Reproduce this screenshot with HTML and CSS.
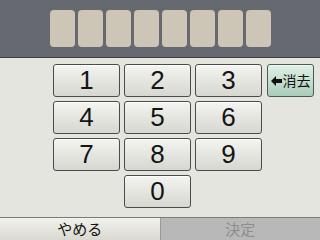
FILE: index.html
```html
<!DOCTYPE html>
<html lang="ja">
<head>
    <meta charset="UTF-8">
    <title>PIN</title>
    <link rel="stylesheet" href="styles.css">
</head>
<body>

<header class="display">
    <span class="slot"></span>
    <span class="slot"></span>
    <span class="slot"></span>
    <span class="slot"></span>
    <span class="slot"></span>
    <span class="slot"></span>
    <span class="slot"></span>
    <span class="slot"></span>
</header>

<main class="pad">
    <button class="key">1</button>
    <button class="key">2</button>
    <button class="key">3</button>
    <button class="key erase">
        <svg width="11" height="10" viewBox="0 0 11 10"><path d="M0 5 L5 0 V3 H11 V7 H5 V10 Z" fill="#111"/></svg>消去
    </button>
    <button class="key">4</button>
    <button class="key">5</button>
    <button class="key">6</button>
    <span></span>
    <button class="key">7</button>
    <button class="key">8</button>
    <button class="key">9</button>
    <span></span>
    <span></span>
    <button class="key">0</button>
</main>

<footer class="bar">
    <button class="cancel">やめる</button>
    <button class="ok" disabled>決定</button>
</footer>

</body>
</html>
```

FILE: styles.css
```css
html, body {
    margin:     0;
    padding:    0;
}
body {
    width:      320px;
    height:     240px;
    overflow:   hidden;
    background: #e5e5df;
    font-family: "Liberation Sans", "Noto Sans CJK JP", sans-serif;
    display:    flex;
    flex-direction: column;
}

.display { /* the entered digits */
    height:     58px;
    box-sizing: border-box;
    padding-top: 10px;
    background: #666a70;
    border-bottom: 1px solid #3c3e42;
    display:    flex;
    justify-content: center;
    gap:        3px;
}
.slot {
    width:      25px;
    height:     37px;
    border-radius: 4px;
    background: #cdc6b6;
}

.pad {
    display:    grid;
    grid-template-columns: 67px 67px 67px 48px;
    grid-template-rows:    repeat(4, 33px);
    gap:        4px;
    padding:    6px 0 0 53px;
}

.key {
    margin:     0;
    padding:    0;
    border:     1px solid #4b4b4b;
    border-radius: 3px;
    background: linear-gradient(#f4f4f0, #d7d7d1);
    box-shadow: inset 0 1px 0 #ffffff;
    color:      #141414;
    font-family: "Liberation Sans", sans-serif;
    font-size:  26px;
    line-height: 31px;
}
.key.erase {
    margin-left: 1px;
    background: linear-gradient(#e2f0e8, #a9cdb9);
    border-color: #4b5a52;
    box-shadow: inset 0 1px 0 #f2faf5;
    font-family: "Noto Sans CJK JP", sans-serif;
    font-size:  14px;
    display:    flex;
    align-items: center;
    justify-content: center;
    gap:        1px;
}

.bar {
    height:     22px;
    margin-top: auto;
    border-top: 1px solid #7a7a7a;
    display:    flex;
}
.bar button {
    flex:       1;
    margin:     0;
    padding:    0;
    border:     none;
    font-family: "Noto Sans CJK JP", sans-serif;
    font-size:  15px;
    line-height: 22px;
}
.cancel {
    background: linear-gradient(#f2f2ec, #d9d9d2);
    color:      #141414;
}
.ok {
    background: #b8b8b8;
    border-left: 1px solid #9a9a9a !important;
    color:      #8e8e8e;
}
```
